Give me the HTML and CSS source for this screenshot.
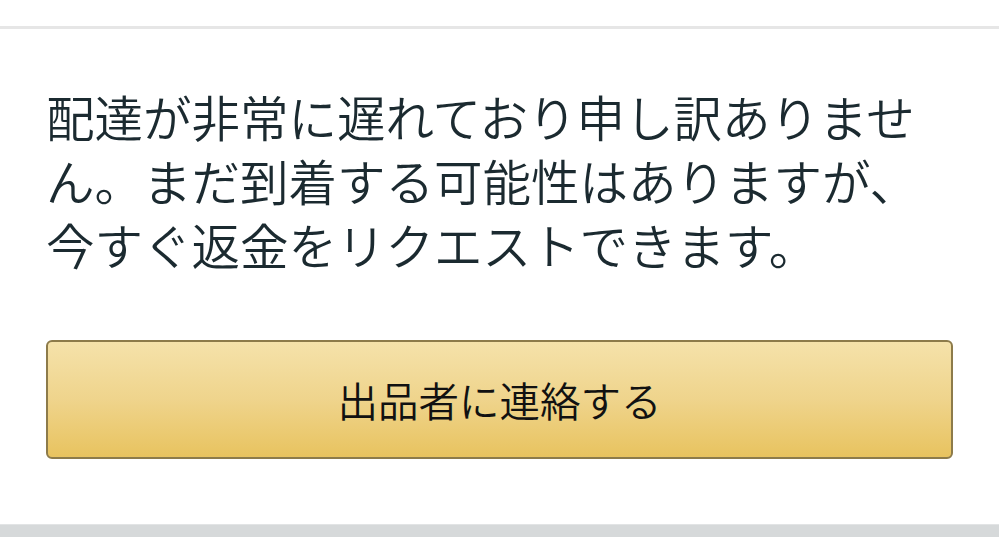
FILE: index.html
```html
<!DOCTYPE html>
<html lang="ja">
<head>
<meta charset="utf-8">
<link rel="stylesheet" href="styles.css">
</head>
<body>
<div class="topbar"></div>
<main class="content">
  <p class="message">配達が非常に遅れており申し訳ありません。まだ到着する可能性はありますが、今すぐ返金をリクエストできます。</p>
  <button class="contact">出品者に連絡する</button>
</main>
<div class="footer"></div>
</body>
</html>
```
FILE: styles.css
```css
html, body {
  margin: 0;
  padding: 0;
  background: #ffffff;
  font-family: "Noto Sans CJK JP", "Noto Sans", sans-serif;
}
body {
  width: 999px;
  height: 537px;
  overflow: hidden;
  display: flex;
  flex-direction: column;
}
.topbar {
  height: 26px;
  border-bottom: 3px solid #e6e6e6;
  flex: none;
}
.content {
  flex: none;
  height: 495px;
  box-sizing: border-box;
  padding: 55px 46px 0 46px;
}
.message {
  margin: 0;
  font-size: 48.5px;
  font-weight: 350;
  line-height: 64px;
  color: #1b2a30;
  width: 907px;
}
.contact {
  display: flex;
  align-items: center;
  justify-content: center;
  margin-top: 64px;
  width: 907px;
  height: 119px;
  box-sizing: border-box;
  border: 2px solid #8d7b4a;
  border-radius: 6px;
  background: linear-gradient(to bottom, #f5e2aa 0%, #efd48c 50%, #e8c35f 100%);
  font-family: "Noto Sans CJK JP", "Noto Sans", sans-serif;
  font-size: 40.5px;
  font-weight: 350;
  color: #111111;
  padding: 0;
}
.footer {
  flex: 1;
  background: #d6d9da;
  border-top: 1px solid #e2e4e5;
}
```
